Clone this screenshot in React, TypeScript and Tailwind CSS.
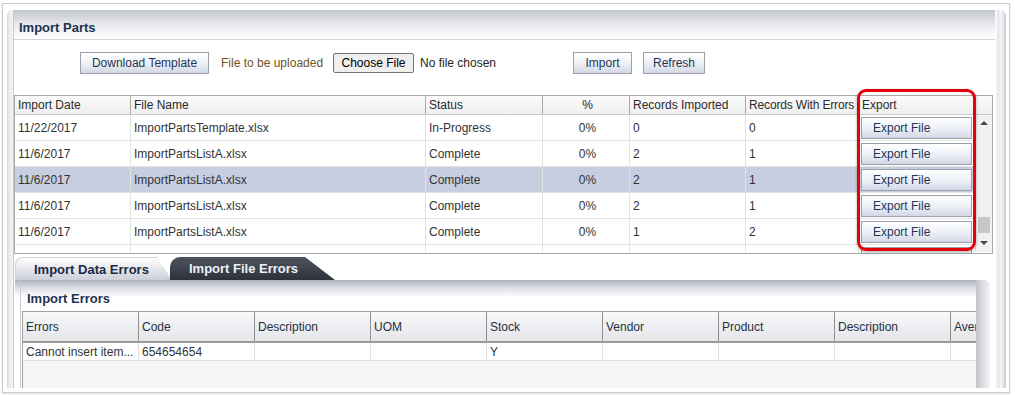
import clsx from 'clsx';

const imports = [
  { date: '11/22/2017', file: 'ImportPartsTemplate.xlsx', status: 'In-Progress', imported: '0', errors: '0' },
  { date: '11/6/2017', file: 'ImportPartsListA.xlsx', status: 'Complete', imported: '2', errors: '1' },
  { date: '11/6/2017', file: 'ImportPartsListA.xlsx', status: 'Complete', imported: '2', errors: '1', selected: true },
  { date: '11/6/2017', file: 'ImportPartsListA.xlsx', status: 'Complete', imported: '2', errors: '1' },
  { date: '11/6/2017', file: 'ImportPartsListA.xlsx', status: 'Complete', imported: '1', errors: '2' },
  { date: '11/6/2017', file: 'ImportPartsListA.xlsx', status: 'Complete', imported: '1', errors: '1' },
];

const errorCols = ['Errors', 'Code', 'Description', 'UOM', 'Stock', 'Vendor', 'Product', 'Description'];
const errorRow = ['Cannot insert item...', '654654654', '', '', 'Y', '', '', ''];

const Btn = ({ children, className }: { children: React.ReactNode; className?: string }) => (
  <button
    className={clsx(
      'h-[22px] border border-[#9aa1ad] bg-gradient-to-b from-white via-[#eef1f6] to-[#d2d8e5] text-[12px] text-[#1f3556] leading-none',
      className
    )}
  >
    {children}
  </button>
);

const cell = 'flex items-center pl-[3px] border-r border-[#e3e3e3] whitespace-nowrap overflow-hidden';
const head = 'flex items-center pl-[3px] border-r border-[#a9a9a9] whitespace-nowrap overflow-hidden';

export default function App() {
  return (
    <div className="w-[1015px] h-[395px] overflow-hidden bg-white pt-[3px] pl-[2px] font-['Liberation_Sans',Arial,sans-serif] text-[12px] text-[#333]">
      <div className="w-[1008px] h-[390px] border border-[#cdcdcd] bg-white pt-[6px] pl-[4px] shadow-[0_1px_2px_rgba(0,0,0,0.12)]">
        <div className="flex h-[378px]">
          {/* left shade */}
          <div className="w-[6px] rounded-tl-[6px] border-l border-[#dadbde] bg-[linear-gradient(to_right,#e4e5e9,#f4f5f7)]" />

          {/* panel body */}
          <div className="w-[982px] flex flex-col border-l border-[#c6c8cd] bg-white">
            {/* header */}
            <div className="h-[30px] border-b border-[#d0d3da] bg-[linear-gradient(to_bottom,#c2c5ce,#e6e7eb_45%,#ffffff)] pl-[5px] pt-[10px]">
              <div className="text-[13px] font-bold leading-[16px] text-[#1f3350]">Import Parts</div>
            </div>

            {/* toolbar */}
            <div className="h-[55px] flex items-start pt-[12px]">
              <Btn className="ml-[66px] w-[129px]">Download Template</Btn>
              <span className="ml-[12px] w-[112px] h-[22px] flex items-center text-[#6e5526]">File to be uploaded</span>
              <button className="mt-[1px] w-[81px] h-[20px] rounded-[2px] border border-[#767676] bg-[#efefef] text-[12px] text-black leading-none">
                Choose File
              </button>
              <span className="ml-[6px] w-[153px] h-[22px] flex items-center text-[#222]">No file chosen</span>
              <Btn className="w-[59px]">Import</Btn>
              <Btn className="ml-[11px] w-[62px]">Refresh</Btn>
            </div>

            {/* imports table */}
            <div className="relative w-[979px] h-[159px]">
              <div className="w-[979px] h-[159px] overflow-hidden border border-[#a9a9a9] bg-white">
                <div className="flex h-[19px] border-b border-[#c8c8c8] bg-gradient-to-b from-[#fbfbfb] to-[#efeff0] text-[#2b2b2b]">
                  <div className={clsx(head, 'w-[116px]')}>Import Date</div>
                  <div className={clsx(head, 'w-[295px]')}>File Name</div>
                  <div className={clsx(head, 'w-[117px]')}>Status</div>
                  <div className={clsx(head, 'w-[87px] justify-center pl-0')}>%</div>
                  <div className={clsx(head, 'w-[116px]')}>Records Imported</div>
                  <div className={clsx(head, 'w-[113px] pl-[2px] tracking-[-0.15px]')}>Records With Errors</div>
                  <div className="flex items-center pl-[3px] w-[133px]">Export</div>
                </div>
                <div className="flex">
                  <div className="w-[960px]">
                    {imports.map((r, i) => (
                      <div key={i} className={clsx('flex h-[26px] border-b border-[#e3e3e3]', r.selected && 'bg-[#c6cee0]')}>
                        <div className={clsx(cell, 'w-[116px]')}>{r.date}</div>
                        <div className={clsx(cell, 'w-[295px]')}>{r.file}</div>
                        <div className={clsx(cell, 'w-[117px]')}>{r.status}</div>
                        <div className={clsx(cell, 'w-[87px] justify-center pl-0')}>0%</div>
                        <div className={clsx(cell, 'w-[116px]')}>{r.imported}</div>
                        <div className={clsx(cell, 'w-[113px]')}>{r.errors}</div>
                        <div className="w-[116px] flex items-center pl-[2px]">
                          <Btn className="w-[111px] text-left pl-[11px]">Export File</Btn>
                        </div>
                      </div>
                    ))}
                  </div>
                  {/* scrollbar */}
                  <div className="w-[17px] h-[137px] flex flex-col items-center border-l border-[#dcdcdc] bg-[#f1f1f1]">
                    <div className="mt-[6px] w-0 h-0 border-x-[4px] border-x-transparent border-b-[4px] border-b-[#4a4a4a]" />
                    <div className="mt-[92px] w-[12px] h-[16px] bg-[#c7c7c7]" />
                    <div className="mt-[8px] w-0 h-0 border-x-[4px] border-x-transparent border-t-[4px] border-t-[#4a4a4a]" />
                  </div>
                </div>
              </div>
              {/* highlight */}
              <div className="absolute left-[843px] top-[-6px] w-[119px] h-[162px] rounded-[9px] border-[3px] border-[#e5000c] shadow-[0_1px_3px_rgba(0,0,0,0.35)]" />
            </div>

            {/* tabs */}
            <div className="mt-[3px] ml-[1px] flex h-[23px]">
              <div className="w-[157px] rounded-tl-[8px] border-l border-t border-[#cfd1d6] bg-gradient-to-b from-white to-[#cbcfd8] pl-[18px] pt-[3px] [clip-path:polygon(0_0,142px_0,157px_100%,0_100%)]">
                <span className="text-[13px] font-bold leading-[16px] text-[#1b2a44]">Import Data Errors</span>
              </div>
              <div className="ml-[-2px] w-[165px] rounded-tl-[10px] bg-gradient-to-b from-[#4c525e] via-[#3e4450] to-[#2c313a] pl-[19px] pt-[3px] [clip-path:polygon(0_0,135px_0,165px_100%,0_100%)]">
                <span className="text-[13px] font-bold leading-[16px] text-[#eef2f8]">Import File Errors</span>
              </div>
            </div>

            {/* errors panel */}
            <div className="ml-[1px] flex w-[975px] h-[108px] rounded-tr-[8px] bg-[linear-gradient(to_bottom,#aeb2be,#dcdee4_8px,#ffffff_17px)]">
              <div className="ml-[5px] w-[956px] flex flex-col border-l border-[#c9ccd3]">
                <div className="h-[31px] pl-[6px] pt-[11px]">
                  <div className="text-[13px] font-bold leading-[16px] text-[#1f3350]">Import Errors</div>
                </div>
                <div className="ml-[1px] w-[954px] flex-1 overflow-hidden border-l border-t border-[#a3a3a3] bg-[#f5f6f8]">
                  <div className="flex h-[31px] border-b-2 border-[#9a9a9a] bg-gradient-to-b from-[#f7f8fa] to-[#e4e6ea] text-[#263040]">
                    {errorCols.map((c, i) => (
                      <div key={i} className="w-[116px] shrink-0 flex items-center pl-[3px] border-r border-[#8f8f8f]">
                        {c}
                      </div>
                    ))}
                    <div className="w-[25px] shrink-0 flex items-center pl-[3px] overflow-hidden whitespace-nowrap">Average Cost</div>
                  </div>
                  <div className="flex h-[18px] border-b border-[#e1e1e1] bg-white">
                    {errorRow.map((c, i) => (
                      <div key={i} className="w-[116px] shrink-0 flex items-center pl-[3px] border-r border-[#e1e1e1] whitespace-nowrap overflow-hidden">
                        {c}
                      </div>
                    ))}
                    <div className="w-[25px] shrink-0" />
                  </div>
                </div>
              </div>
              <div className="w-[14px] rounded-tr-[8px] bg-[linear-gradient(to_right,#c1c4cc,#d8dadf_40%,#f2f3f5)]" />
            </div>
          </div>

          {/* right shade */}
          <div className="w-[11px] rounded-tr-[6px] bg-[linear-gradient(to_right,#ffffff,#e5e6e9_30%,#f6f6f8_55%,#c8cbd2)]" />
        </div>
      </div>
    </div>
  );
}
